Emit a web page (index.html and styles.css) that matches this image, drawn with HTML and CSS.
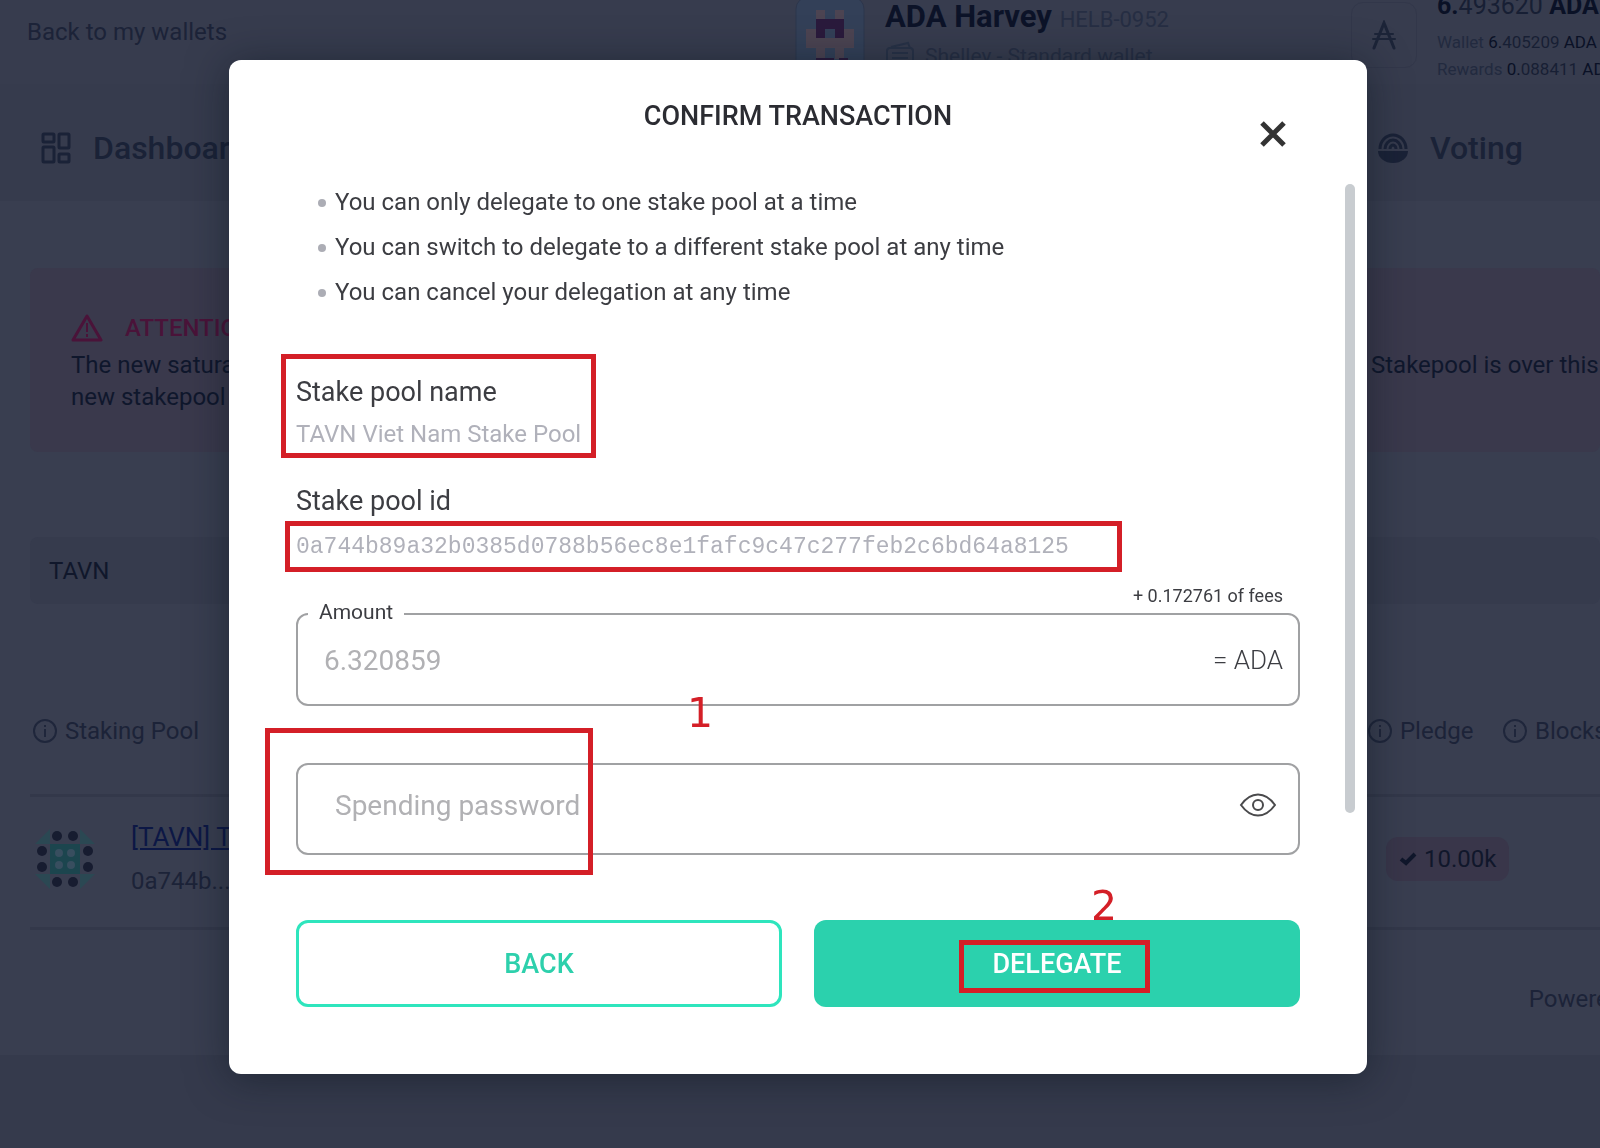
FILE: index.html
```html
<!DOCTYPE html>
<html lang="en">
  <head>
    <meta charset="UTF-8" />
    <meta name="viewport" content="width=device-width, initial-scale=1" />
    <title>Confirm transaction</title>
    <link rel="stylesheet" href="styles.css">
  </head>
  <body>
    <!-- Wallet page behind the dialog -->
    <div class="page">
      <header class="header">
        <a class="back-link" href="#">Back to my wallets</a>
        <div class="wallet">
          <svg class="plate" viewBox="0 0 70 70">
            <rect x="1" y="-3" width="68" height="78" rx="12" fill="#334058" stroke="#2d364c" />
            <path d="M21 10h9v9h-9zM40 10h9v9h-9zM11 29h10v9h28v-9h10v19H49v11h-9V48H30v11h-9V48H11z" fill="#4c4452" />
            <path d="M21 19h28v19H40v-9H30v9h-9zM21 58h18v9H21zM44 58h9v9h-9z" fill="#2a1a3c" />
          </svg>
          <div class="wallet-info">
            <div class="wallet-name">ADA Harvey <small>HELB-0952</small></div>
            <div class="wallet-type">
              <svg width="30" height="30" viewBox="0 0 30 30" fill="none" stroke="#283247" stroke-width="2">
                <rect x="2" y="7" width="26" height="21" rx="3" />
                <path d="M6 6l17-4 2 5M7 12h16M7 17h16M7 22h16" />
              </svg>
              Shelley - Standard wallet
            </div>
          </div>
        </div>
        <div class="balance">
          <div class="coin">
            <svg width="26" height="30" viewBox="0 0 26 30" fill="none" stroke="#1c2438" stroke-width="3" stroke-linecap="round">
              <path d="M3 28L13 3l10 25" />
              <path d="M4 14h18M2 19h22" stroke-width="2" />
            </svg>
          </div>
          <div class="amounts">
            <p class="total"><b>6.</b>493620 <b>ADA</b></p>
            <p>Wallet <em>6.</em><i>405209</i> <em>ADA</em></p>
            <p>Rewards <em>0.</em><i>088411</i> <em>ADA</em></p>
          </div>
        </div>
      </header>

      <nav class="tabs">
        <a href="#">
          <svg width="30" height="32" viewBox="0 0 30 32" fill="none" stroke="#1a2237" stroke-width="3">
            <rect x="2" y="2" width="11" height="8" rx="1" />
            <rect x="18" y="2" width="10" height="14" rx="1" />
            <rect x="2" y="15" width="11" height="15" rx="1" />
            <rect x="18" y="22" width="10" height="8" rx="1" />
          </svg>
          Dashboard
        </a>
        <a href="#">
          <svg width="30" height="32" viewBox="0 0 30 32">
            <path d="M0 19a15 12 0 0 0 30 0z" fill="#1a2237" />
            <path d="M2 17a13 14 0 0 1 26 0M7 17a8 9 0 0 1 16 0M12 17a3 4 0 0 1 6 0" fill="none" stroke="#1a2237" stroke-width="3" />
          </svg>
          Voting
        </a>
      </nav>

      <main class="content">
        <section class="notice">
          <h2>
            <svg width="32" height="28" viewBox="0 0 32 28" fill="none" stroke="#4a1339" stroke-width="3" stroke-linejoin="round">
              <path d="M16 2L30 26H2z" />
              <path d="M16 9v9M16 20v3" stroke-width="2" />
            </svg>
            ATTENTION
          </h2>
          <div class="notice-text">
            <p>The new saturation<br />new stakepool</p>
            <p>Stakepool is over this</p>
          </div>
        </section>

        <input class="search" type="text" value="TAVN" aria-label="Search stake pools" />

        <table class="pools">
          <colgroup>
            <col />
            <col class="col-pledge" />
            <col class="col-blocks" />
          </colgroup>
          <thead>
            <tr>
              <th>
                <svg class="info" viewBox="0 0 24 24"><circle cx="12" cy="12" r="11" /><path d="M12 10v8M12 6v2" /></svg>
                Staking Pool
              </th>
              <th>
                <svg class="info" viewBox="0 0 24 24"><circle cx="12" cy="12" r="11" /><path d="M12 10v8M12 6v2" /></svg>
                Pledge
              </th>
              <th>
                <svg class="info" viewBox="0 0 24 24"><circle cx="12" cy="12" r="11" /><path d="M12 10v8M12 6v2" /></svg>
                Blocks
              </th>
            </tr>
          </thead>
          <tbody>
            <tr>
              <td>
                <div class="pool">
                  <svg width="60" height="60" viewBox="0 0 60 60">
                    <path d="M0 15L15 0v15zM60 15L45 0v15zM0 45l15 15V45zM60 45L45 60V45z" fill="#2b4853" />
                    <rect x="15" y="15" width="30" height="30" fill="#1c454e" />
                    <g fill="#384e5f">
                      <circle cx="24" cy="24" r="4" /><circle cx="36" cy="24" r="4" />
                      <circle cx="24" cy="36" r="4" /><circle cx="36" cy="36" r="4" />
                    </g>
                    <g fill="#171c30">
                      <circle cx="22" cy="7" r="5" /><circle cx="38" cy="7" r="5" />
                      <circle cx="22" cy="53" r="5" /><circle cx="38" cy="53" r="5" />
                      <circle cx="7" cy="22" r="5" /><circle cx="7" cy="38" r="5" />
                      <circle cx="53" cy="22" r="5" /><circle cx="53" cy="38" r="5" />
                    </g>
                  </svg>
                  <div>
                    <a href="#">[TAVN] TAVN Viet Nam</a>
                    <p>0a744b...</p>
                  </div>
                </div>
              </td>
              <td>
                <span class="pledge">
                  <svg width="18" height="14" viewBox="0 0 18 14" fill="none" stroke="#10172b" stroke-width="4"><path d="M2 7l5 4 9-9" /></svg>
                  10.00k
                </span>
              </td>
              <td></td>
            </tr>
          </tbody>
        </table>

        <footer class="powered">Powered by</footer>
      </main>
    </div>

    <!-- Dialog -->
    <div class="overlay">
      <form class="modal" role="dialog" aria-labelledby="title">
        <h1 id="title">CONFIRM TRANSACTION</h1>
        <button class="close" type="button" aria-label="Close">
          <svg width="28" height="28" viewBox="0 0 28 28" stroke="#333" stroke-width="5"><path d="M3 3l22 22M25 3L3 25" /></svg>
        </button>

        <ul class="rules">
          <li>You can only delegate to one stake pool at a time</li>
          <li>You can switch to delegate to a different stake pool at any time</li>
          <li>You can cancel your delegation at any time</li>
        </ul>

        <dl class="details">
          <dt>Stake pool name</dt>
          <dd>TAVN Viet Nam Stake Pool</dd>
          <dt>Stake pool id</dt>
          <dd class="hash">0a744b89a32b0385d0788b56ec8e1fafc9c47c277feb2c6bd64a8125</dd>
        </dl>

        <p class="fees">+ 0.172761 of fees</p>
        <fieldset class="field amount">
          <legend><label for="amount">Amount</label></legend>
          <input id="amount" type="text" value="6.320859" />
          <span class="unit">= ADA</span>
        </fieldset>

        <div class="field password">
          <input type="password" placeholder="Spending password" aria-label="Spending password" />
          <button class="eye" type="button" aria-label="Show password">
            <svg width="38" height="26" viewBox="0 0 38 26" fill="none" stroke="#4a4a4c" stroke-width="2">
              <path d="M2 13C12-1 26-1 36 13 26 27 12 27 2 13z" />
              <circle cx="19" cy="13" r="5" />
            </svg>
          </button>
        </div>

        <div class="actions">
          <button class="btn btn-back" type="button">BACK</button>
          <button class="btn btn-delegate" type="submit">DELEGATE</button>
        </div>

        <div class="scrollbar"></div>

        <!-- Step marks -->
        <div class="mark mark-name"></div>
        <div class="mark mark-id"></div>
        <div class="mark mark-password"></div>
        <div class="mark mark-delegate"></div>
        <span class="step step-1">1</span>
        <span class="step step-2">2</span>
      </form>
    </div>
  </body>
</html>
```

FILE: styles.css
```css
* {
  margin: 0;
  padding: 0;
  box-sizing: border-box;
}
body {
  background: #353a4c;
  font-family: Roboto, "Open Sans", sans-serif;
  font-size: 24px;
  color: #1c2338;
  height: 100vh;
  overflow: hidden;
}
a {
  color: inherit;
  text-decoration: none;
}
svg {
  flex-shrink: 0;
}
input,
button {
  font-family: inherit;
  background: none;
  border: none;
  outline: none;
}

/* Header */
.page {
  overflow: hidden;
  white-space: nowrap;
}
.header {
  display: grid;
  grid-template-columns: 1fr 556px 249px;
  height: 84px;
  background: #373c4e;
}
.back-link {
  padding: 18px 27px;
  line-height: 28px;
}
.wallet {
  display: flex;
  gap: 20px;
}
.plate {
  width: 70px;
  height: 70px;
}
.wallet-name {
  font-size: 31px;
  font-weight: 700;
  line-height: 34px;
  color: #0c1328;
}
.wallet-name small {
  font-size: 22px;
  font-weight: 400;
  color: #262e43;
}
.wallet-type {
  display: flex;
  align-items: center;
  gap: 10px;
  font-size: 21px;
  line-height: 38px;
  color: #262e43;
}
.balance {
  display: flex;
  gap: 20px;
}
.coin {
  display: flex;
  align-items: center;
  justify-content: center;
  flex-shrink: 0;
  width: 66px;
  height: 66px;
  margin-top: 2px;
  border: 1px solid #32374a;
  border-radius: 12px;
}
.amounts {
  margin-top: -9px;
  font-size: 17px;
  line-height: 27px;
  color: #222a3f;
}
.amounts .total {
  margin-bottom: 8px;
  font-size: 25px;
  line-height: 30px;
  color: #171f34;
}
.amounts b,
.amounts em {
  font-style: normal;
  color: #0a1126;
}
.amounts i {
  font-style: normal;
  color: #171f34;
}

/* Tabs */
.tabs {
  display: grid;
  grid-template-columns: 1fr 222px;
  height: 117px;
  padding-left: 41px;
  padding-bottom: 20px;
  background: #363b4d;
}
.tabs a {
  display: flex;
  align-items: center;
  gap: 22px;
  padding-top: 30px;
  font-size: 32px;
  font-weight: 500;
  color: #1a2237;
}

/* Staking list */
.content {
  height: 854px;
  padding: 67px 0 0 30px;
  background: #393e50;
}
.notice {
  height: 184px;
  padding: 42px 0 0 41px;
  background: #3a394c;
  border-radius: 8px;
}
.notice h2 {
  display: flex;
  align-items: center;
  gap: 22px;
  font-size: 24px;
  font-weight: 500;
  line-height: 36px;
  color: #4a1339;
}
.notice-text {
  display: grid;
  grid-template-columns: 1fr 229px;
  margin-top: 3px;
  line-height: 32px;
  color: #0f172c;
}
.search {
  display: block;
  width: 100%;
  height: 67px;
  margin-top: 85px;
  padding-left: 19px;
  font-size: 24px;
  color: #10172b;
  background: #363b4d;
  border-radius: 8px;
}
.pools {
  width: 100%;
  margin-top: 106px;
  table-layout: fixed;
  border-collapse: collapse;
}
.col-pledge {
  width: 135px;
}
.col-blocks {
  width: 97px;
}
.pools th {
  height: 85px;
  padding-top: 7px;
  vertical-align: top;
  text-align: left;
  font-size: 24px;
  font-weight: 400;
}
.pools th:first-child {
  padding-left: 3px;
}
.info {
  width: 24px;
  height: 24px;
  margin-right: 2px;
  vertical-align: -4px;
  fill: none;
  stroke: #1f263b;
  stroke-width: 2;
}
.pools th,
.pools td {
  border-bottom: 3px solid #33384a;
}
.pools td {
  height: 133px;
  padding-bottom: 6px;
}
.pool {
  display: flex;
  align-items: center;
  gap: 36px;
  padding-left: 5px;
}
.pool a {
  font-size: 26px;
  color: #0c1745;
  text-decoration: underline;
}
.pool p {
  margin-top: 15px;
}
.pledge {
  display: inline-flex;
  align-items: center;
  gap: 7px;
  height: 44px;
  margin-left: 18px;
  padding: 0 13px;
  color: #10172b;
  background: #39364a;
  border-radius: 12px;
}
.powered {
  margin-right: -53px;
  padding-top: 55px;
  text-align: right;
}

/* Dialog */
.overlay {
  position: fixed;
  inset: 0;
  display: flex;
  justify-content: center;
  align-items: flex-start;
  padding: 60px 4px 0 0;
}
.modal {
  position: relative;
  width: 1138px;
  padding: 38px 67px 67px;
  background: #fff;
  border-radius: 12px;
  box-shadow: 0 4px 40px rgba(10, 20, 30, 0.5);
  color: #3c3d42;
}
.modal h1 {
  font-size: 27px;
  font-weight: 500;
  line-height: 36px;
  text-align: center;
  color: #2b2c32;
}
.close {
  position: absolute;
  top: 60px;
  right: 80px;
  width: 28px;
  height: 28px;
}
.rules {
  margin-top: 46px;
  list-style: none;
}
.rules li {
  display: flex;
  align-items: center;
  gap: 9px;
  padding-left: 22px;
  line-height: 45px;
}
.rules li::before {
  content: "";
  width: 8px;
  height: 8px;
  border-radius: 50%;
  background: #acadb5;
}
.details {
  margin-top: 59px;
}
.details dt {
  font-size: 27px;
  line-height: 36px;
}
.details dd {
  margin-bottom: 25px;
  line-height: 48px;
  color: #b0b1ba;
}
.details .hash {
  margin-bottom: 0;
  font-family: "Liberation Mono", monospace;
  font-size: 23px;
  line-height: 56px;
}
.fees {
  margin-top: 9px;
  padding-right: 17px;
  font-size: 18px;
  line-height: 24px;
  text-align: right;
}
.field {
  display: flex;
  align-items: center;
  height: 92px;
  border: 2px solid #a0a1a3;
  border-radius: 12px;
}
.amount {
  height: 106px;
  margin-top: -8px;
  padding: 0 15px 12px 26px;
}
.amount legend {
  margin-left: -16px;
  padding: 0 11px 4px;
  font-size: 21px;
  line-height: 24px;
}
.field input {
  flex: 1;
  min-width: 0;
  height: 64px;
  font-size: 28px;
  color: #b1b1b4;
}
.field input::placeholder {
  color: #b1b1b4;
}
.unit {
  font-size: 26px;
  font-weight: 300;
}
.password {
  margin-top: 57px;
  padding: 0 21px 8px 37px;
}
.eye {
  height: 26px;
}
.actions {
  display: grid;
  grid-template-columns: 1fr 1fr;
  gap: 32px;
  margin-top: 65px;
}
.btn {
  height: 87px;
  font-size: 27px;
  font-weight: 500;
  border-radius: 12px;
}
.btn-back {
  color: #2dd0ac;
  border: 3px solid #2ee5bd;
}
.btn-delegate {
  color: #fff;
  background: #2bd1ad;
}
.scrollbar {
  position: absolute;
  top: 124px;
  right: 12px;
  width: 10px;
  height: 629px;
  border-radius: 5px;
  background: #c8ccd0;
}

/* Step marks */
.mark {
  position: absolute;
  border: 5px solid #d41f27;
  pointer-events: none;
}
.mark-name {
  top: 294px;
  left: 52px;
  width: 315px;
  height: 104px;
}
.mark-id {
  top: 461px;
  left: 56px;
  width: 837px;
  height: 51px;
}
.mark-password {
  top: 668px;
  left: 36px;
  width: 328px;
  height: 147px;
}
.mark-delegate {
  top: 880px;
  left: 730px;
  width: 191px;
  height: 53px;
}
.step {
  position: absolute;
  font-family: "DejaVu Sans", sans-serif;
  font-size: 41px;
  line-height: 48px;
  color: #d41f27;
}
.step-1 {
  top: 629px;
  left: 458px;
}
.step-2 {
  top: 822px;
  left: 862px;
}
```
